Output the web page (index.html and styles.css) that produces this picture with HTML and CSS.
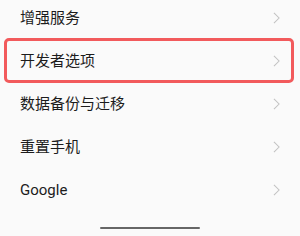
FILE: index.html
```html
<!DOCTYPE html>
<html lang="zh-CN">
<head>
  <meta charset="UTF-8">
  <meta name="viewport" content="width=device-width, initial-scale=1.0">
  <title>设置</title>
  <link rel="stylesheet" href="styles.css">
</head>
<body>
  <div class="screen">
    <div class="menu">
      <div class="item">
        <span class="label">增强服务</span>
        <svg class="chevron" viewBox="0 0 8 14"><polyline points="1,1 7,7 1,13"/></svg>
      </div>
      <div class="item marked">
        <span class="label">开发者选项</span>
        <svg class="chevron" viewBox="0 0 8 14"><polyline points="1,1 7,7 1,13"/></svg>
      </div>
      <div class="item">
        <span class="label">数据备份与迁移</span>
        <svg class="chevron" viewBox="0 0 8 14"><polyline points="1,1 7,7 1,13"/></svg>
      </div>
      <div class="item">
        <span class="label">重置手机</span>
        <svg class="chevron" viewBox="0 0 8 14"><polyline points="1,1 7,7 1,13"/></svg>
      </div>
      <div class="item">
        <span class="label">Google</span>
        <svg class="chevron" viewBox="0 0 8 14"><polyline points="1,1 7,7 1,13"/></svg>
      </div>
    </div>
    <div class="home-bar"></div>
  </div>
</body>
</html>
```

FILE: styles.css
```css
body {
  margin: 0;
  background-color: #fafafa;
  font-family: Roboto, "Noto Sans CJK SC", sans-serif;
  color: #1c1c1c;
}

.screen {
  width: 300px;
  height: 236px;
  overflow: hidden;
  display: flex;
  flex-direction: column;
}

.menu {
  margin-top: -4px;
  display: flex;
  flex-direction: column;
}

.item {
  height: 43px;
  margin: 0 7px 0 5px;
  padding: 0 13px 0 15px;
  display: flex;
  align-items: center;
  justify-content: space-between;
}

.item.marked {
  outline: 3px solid #f25a5c;
  outline-offset: -2px;
  border-radius: 4px;
}

.label {
  font-size: 15px;
  line-height: 20px;
}

.chevron {
  width: 7px;
  height: 12px;
  fill: none;
  stroke: #c2c2c2;
  stroke-width: 1.2;
}

.home-bar {
  width: 100px;
  height: 2px;
  margin: auto auto 7px;
  background-color: #666;
  border-radius: 1px;
}
```
